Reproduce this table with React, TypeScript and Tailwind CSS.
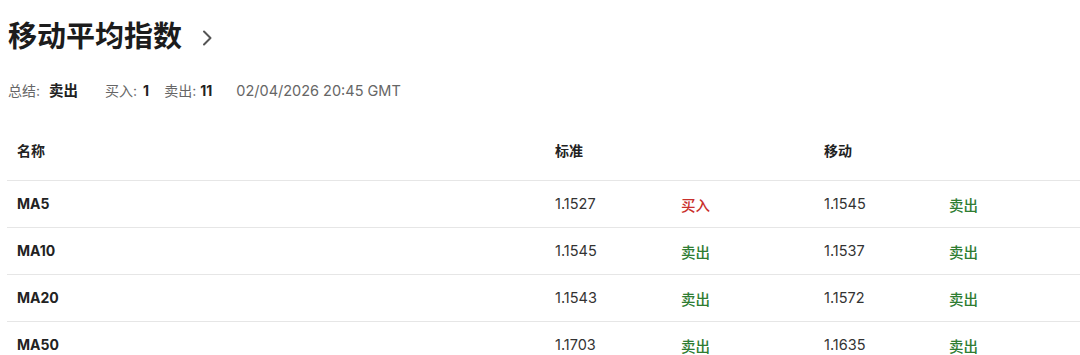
import React from "react";

const rows = [
  { name: "MA5", s: "1.1527", sSig: "买入", m: "1.1545", mSig: "卖出" },
  { name: "MA10", s: "1.1545", sSig: "卖出", m: "1.1537", mSig: "卖出" },
  { name: "MA20", s: "1.1543", sSig: "卖出", m: "1.1572", mSig: "卖出" },
  { name: "MA50", s: "1.1703", sSig: "卖出", m: "1.1635", mSig: "卖出" },
];

function Sig({ v }: { v: string }) {
  return (
    <span className={v === "买入" ? "text-[#c9302c] font-medium text-[14.5px]" : "text-[#2f7d32] font-medium text-[14.5px]"}>{v}</span>
  );
}

export default function App() {
  return (
    <div
      className="w-[1080px] h-[355px] overflow-hidden bg-white text-[#222]"
      style={{ fontFamily: 'Inter, "Noto Sans CJK SC", sans-serif' }}
    >
      <div className="pl-[8px] pt-[19px] flex items-center h-[55px]">
        <h1 className="text-[29px] leading-[36px] font-bold text-[#1c1c1c]">移动平均指数</h1>
        <svg className="ml-[19px] mt-[2px]" width="12" height="18" viewBox="0 0 12 18" fill="none">
          <path d="M3 2.5 L9.5 9 L3 15.5" stroke="#555" strokeWidth="2" strokeLinecap="round" strokeLinejoin="round" />
        </svg>
      </div>
      <div className="pl-[8px] mt-[26px] flex items-center text-[14px] leading-[20px]">
        <span className="text-[#666]">总结:</span>
        <span className="ml-[9px] font-bold text-[#222] text-[14.5px]">卖出</span>
        <span className="ml-[27px] text-[#666]">买入:</span>
        <span className="ml-[6px] font-bold text-[#222]">1</span>
        <span className="ml-[15px] text-[#666]">卖出:</span>
        <span className="ml-[4px] font-bold text-[#222]">11</span>
        <span className="ml-[24px] text-[#666] text-[14.5px]">02/04/2026 20:45 GMT</span>
      </div>
      <div className="ml-[7px] mt-[29px]">
        <div className="grid grid-cols-[548px_126px_143px_125px_1fr] pt-[11px] pb-[19px] border-b border-[#e6e6e6] text-[14px] leading-[20px] font-semibold text-[#222]">
          <div className="pl-[10px]">名称</div>
          <div>标准</div>
          <div></div>
          <div>移动</div>
          <div></div>
        </div>
        {rows.map((r) => (
          <div
            key={r.name}
            className="grid grid-cols-[548px_126px_143px_125px_1fr] h-[47px] items-center border-b border-[#e6e6e6] text-[14px] leading-[20px]"
          >
            <div className="pl-[10px] font-bold text-[#222]">{r.name}</div>
            <div className="text-[#333] text-[14.5px]">{r.s}</div>
            <div className="pt-[4px]"><Sig v={r.sSig} /></div>
            <div className="text-[#333] text-[14.5px]">{r.m}</div>
            <div className="pt-[4px]"><Sig v={r.mSig} /></div>
          </div>
        ))}
      </div>
    </div>
  );
}
